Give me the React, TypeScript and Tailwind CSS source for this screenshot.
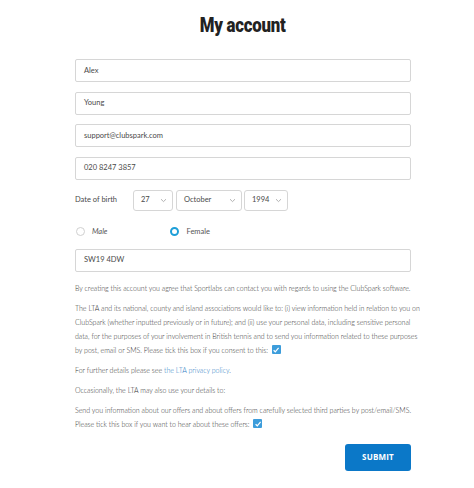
import React from "react";

function Chevron() {
  return (
    <svg width="7" height="5" viewBox="0 0 7 5" className="shrink-0">
      <path d="M1 1.2 L3.5 3.6 L6 1.2" fill="none" stroke="#a9a9a9" strokeWidth="0.9" />
    </svg>
  );
}

function Check() {
  return (
    <span className="inline-flex items-center justify-center w-[9px] h-[9px] bg-[#3d9ddb] align-[-1px] ml-[2px] rounded-[1px]">
      <svg width="8" height="8" viewBox="0 0 8 8">
        <path d="M1.6 4.2 L3.3 5.8 L6.6 1.8" fill="none" stroke="#ffffff" strokeWidth="1.2" />
      </svg>
    </span>
  );
}

function Field({ value }: { value: string }) {
  return (
    <div className="h-[23px] border border-[#d6d6d6] rounded-[2px] flex items-center pl-[8px] text-[7.5px] text-[#4a4a4a]">
      {value}
    </div>
  );
}

export default function App() {
  return (
    <div className="w-[474px] h-[488px] bg-white font-['Lato',sans-serif] text-[#3a3a3a]">
      <div className="flex justify-center pt-[12px] pl-[12px]">
        <h1 className="font-['Roboto',sans-serif] font-black text-[21px] leading-[26px] text-[#222] scale-x-[0.8] tracking-[-0.3px]">
          My account
        </h1>
      </div>
      <div className="ml-[75px] w-[336px] mt-[21px]">
        <div className="flex flex-col gap-[9.5px]">
          <Field value="Alex" />
          <Field value="Young" />
          <Field value="support@clubspark.com" />
          <Field value="020 8247 3857" />
        </div>
        <div className="flex items-center mt-[10px] h-[21px]">
          <span className="text-[7.5px] text-[#4a4a4a] w-[58px]">Date of birth</span>
          <div className="h-[21px] w-[40px] border border-[#d6d6d6] rounded-[3px] flex items-center justify-between pl-[7px] pr-[5px] text-[7.5px] text-[#4a4a4a]">
            27 <Chevron />
          </div>
          <div className="h-[21px] w-[66px] ml-[3px] border border-[#d6d6d6] rounded-[3px] flex items-center justify-between pl-[7px] pr-[5px] text-[7.5px] text-[#4a4a4a]">
            October <Chevron />
          </div>
          <div className="h-[21px] w-[44px] ml-[2px] border border-[#d6d6d6] rounded-[3px] flex items-center justify-between pl-[7px] pr-[5px] text-[7.5px] text-[#4a4a4a]">
            1994 <Chevron />
          </div>
        </div>
        <div className="flex items-center mt-[16px] h-[10px] text-[7.5px] text-[#555]">
          <span className="w-[9px] h-[9px] rounded-full border border-[#d0d0d0] ml-[1px]"></span>
          <span className="ml-[7px] italic">Male</span>
          <span className="w-[9px] h-[9px] rounded-full border-[2.5px] border-[#1e9fd8] ml-[63px]"></span>
          <span className="ml-[7px]">Female</span>
        </div>
        <div className="mt-[12px]">
          <Field value="SW19 4DW" />
        </div>
        <div className="mt-[9px] text-[7px] leading-[14px] text-[#333] font-light flex flex-col gap-[6px]">
          <p className="whitespace-nowrap">
            By creating this account you agree that Sportlabs can contact you with regards to using the ClubSpark software.
          </p>
          <p className="whitespace-nowrap">
            The LTA and its national, county and island associations would like to: (i) view information held in relation to you on
            <br />
            ClubSpark (whether inputted previously or in future); and (ii) use your personal data, including sensitive personal
            <br />
            data, for the purposes of your involvement in British tennis and to send you information related to these purposes
            <br />
            by post, email or SMS. Please tick this box if you consent to this: <Check />
          </p>
          <p className="whitespace-nowrap">
            For further details please see <span className="text-[#2b7bc4]">the LTA privacy policy</span>.
          </p>
          <p className="whitespace-nowrap">Occasionally, the LTA may also use your details to:</p>
          <p className="whitespace-nowrap">
            Send you information about our offers and about offers from carefully selected third parties by post/email/SMS.
            <br />
            Please tick this box if you want to hear about these offers: <Check />
          </p>
        </div>
        <div className="flex justify-end mt-[13px]">
          <button className="w-[66px] h-[27px] bg-[#0b78c8] rounded-[3px] text-white text-[8px] font-bold tracking-[0.2px] font-['Open_Sans',sans-serif]">
            SUBMIT
          </button>
        </div>
      </div>
    </div>
  );
}
